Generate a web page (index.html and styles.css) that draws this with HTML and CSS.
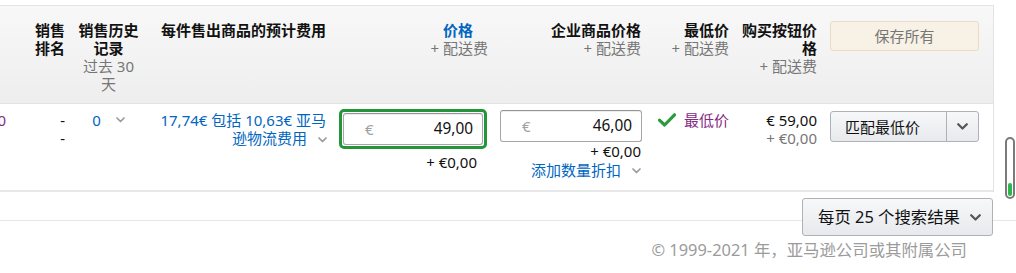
FILE: index.html
```html
<!DOCTYPE html>
<html lang="zh-CN">
<head>
<meta charset="utf-8">
<title>库存</title>
<link rel="stylesheet" href="styles.css">
</head>
<body>
<div class="page">
  <div class="table">
    <div class="grid thead">
      <div class="c c0"></div>
      <div class="c c1 th right">销售排名</div>
      <div class="c c2 th center">销售历史记录<div class="sub">过去 30 天</div></div>
      <div class="c c3 th right">每件售出商品的预计费用</div>
      <div class="c c4 th right"><div class="sort link">价格</div><div class="sub sub-price">+ 配送费</div></div>
      <div class="c c5 th right">企业商品价格<div class="sub">+ 配送费</div></div>
      <div class="c c6 th right">最低价<div class="sub">+ 配送费</div></div>
      <div class="c c7 th right">购买按钮价格<div class="sub">+ 配送费</div></div>
      <div class="c c8"><button class="save-btn">保存所有</button></div>
    </div>
    <div class="grid trow">
      <div class="c c0 right"><span class="visited num0">0</span></div>
      <div class="c c1 right">-<br>-</div>
      <div class="c c2 center"><span class="link">0</span><svg class="chev chev-sales" width="9" height="6" viewBox="0 0 9 6"><polyline points="1,1 4.5,4.5 8,1"/></svg></div>
      <div class="c c3 right link">17,74€ 包括 10,63€ 亚马逊物流费用<svg class="chev chev-fee" width="9" height="6" viewBox="0 0 9 6"><polyline points="1,1 4.5,4.5 8,1"/></svg></div>
      <div class="c c4">
        <div class="ring"><div class="input input-price"><span class="cur">€</span><span class="val">49,00</span></div></div>
        <div class="right ship ship-price">+ €0,00</div>
      </div>
      <div class="c c5">
        <div class="input input-biz"><span class="cur">€</span><span class="val">46,00</span></div>
        <div class="right ship">+ €0,00</div>
        <div class="right link qty">添加数量折扣<svg class="chev chev-qty" width="9" height="6" viewBox="0 0 9 6"><polyline points="1,1 4.5,4.5 8,1"/></svg></div>
      </div>
      <div class="c c6">
        <div class="lowest"><svg class="check" width="18" height="14" viewBox="0 0 18 14"><path d="M1.5 7.2 L6.6 12 L16.5 1.8"/></svg><span class="visited">最低价</span></div>
      </div>
      <div class="c c7 right">€ 59,00<div class="muted">+ €0,00</div></div>
      <div class="c c8">
        <div class="split">
          <button class="split-main">匹配最低价</button>
          <button class="split-arrow"><svg class="chev-dark" width="11" height="7" viewBox="0 0 11 7"><polyline points="1.2,1.2 5.5,5.5 9.8,1.2"/></svg></button>
        </div>
      </div>
    </div>
  </div>
  <div class="pager">
    <button class="pager-btn"><span>每页 25 个搜索结果</span><svg class="chev-dark" width="11" height="7" viewBox="0 0 11 7"><polyline points="1.2,1.2 5.5,5.5 9.8,1.2"/></svg></button>
  </div>
  <div class="footer">© 1999-2021 年，亚马逊公司或其附属公司</div>
  <div class="scroll-thumb"><span class="scroll-fill"></span></div>
</div>
</body>
</html>
```

FILE: styles.css
```css
html, body {
  margin: 0;
  padding: 0;
}
body {
  font-family: "Noto Sans", "Noto Sans CJK SC", sans-serif;
  font-size: 15px;
  line-height: 18px;
  color: #111;
  background: #fff;
  overflow: hidden;
  width: 1016px;
  height: 273px;
}
.page {
  position: relative;
  padding-top: 5px;
  height: 273px;
  box-sizing: border-box;
}
.table {
  width: 993px;
  border-top: 1px solid #e3e3e3;
  border-right: 1px solid #e3e3e3;
}
.grid {
  display: grid;
  grid-template-columns: 20px 59px 87px 174px 163px 152px 88px 88px 176px;
  margin-left: -14px;
}
.thead {
  height: 98px;
  box-sizing: border-box;
  padding-top: 15px;
  background: linear-gradient(#f8f8f8, #eeeeee);
  border-bottom: 1px solid #e3e3e3;
}
.trow {
  height: 88px;
  box-sizing: border-box;
  padding-top: 7px;
  border-bottom: 2px solid #e7e7e7;
}
.c {
  min-width: 0;
}
.th {
  font-weight: 700;
  color: #111;
}
.sub {
  font-weight: 400;
  color: #767676;
}
.right { text-align: right; }
.center { text-align: center; }
.link { color: #0066c0; }
.visited { color: #862a86; }
.muted { color: #767676; }

.c1.th { padding-left: 27px; }
.c2 { padding: 0 12px; }
.sort { padding-right: 16px; }
.sub-price { padding-right: 1px; }
.c7.th { padding-left: 10px; }

.num0 {
  display: inline-block;
  margin-top: -6px;
}

.chev {
  fill: none;
  stroke: #9a9a9a;
  stroke-width: 1.7;
  stroke-linecap: round;
  stroke-linejoin: round;
  vertical-align: middle;
}
.chev-sales { margin-left: 15px; margin-top: -3px; }
.chev-fee { margin-left: 11px; margin-right: -1px; }
.chev-qty { margin-left: 11px; margin-top: -2px; }
.chev-dark {
  fill: none;
  stroke: #555;
  stroke-width: 2.2;
  stroke-linecap: round;
  stroke-linejoin: round;
}

.ring {
  margin: -2px 2px 0 13px;
  border: 3px solid #23963a;
  border-radius: 5px;
  padding: 1px;
  width: 140px;
}
.input {
  display: flex;
  align-items: center;
  justify-content: space-between;
  height: 32px;
  box-sizing: border-box;
  border: 1px solid #a6a6a6;
  border-top-color: #949494;
  border-radius: 3px;
  background: #fff;
  box-shadow: inset 0 1px 0 rgba(0, 0, 0, 0.07);
  padding: 0 9px 0 21px;
}
.val { font-size: 15.4px; }
.input-price { width: 140px; }
.input-biz {
  width: 142px;
  margin: -1px 0 0 11px;
}
.cur { color: #a0a0a0; }
.val { color: #111; }
.ship-price {
  margin-top: 4px;
  padding-right: 12px;
}
.qty { margin-top: 1px; }

.lowest {
  display: flex;
  justify-content: flex-end;
  align-items: center;
  gap: 8px;
}
.check {
  fill: none;
  stroke: #2a9c3e;
  stroke-width: 3.2;
  stroke-linecap: round;
  stroke-linejoin: round;
}

.save-btn {
  display: block;
  margin-left: 13px;
  width: 149px;
  height: 30px;
  border: 1px solid #eadcc4;
  border-radius: 3px;
  background: #f8f1e5;
  color: #767676;
  font: inherit;
  padding: 0;
}

.split {
  display: flex;
  margin-left: 13px;
  width: 149px;
  height: 31px;
  border: 1px solid #adb1b8;
  border-radius: 3px;
  box-sizing: border-box;
  background: linear-gradient(#f7f8fa, #e7e9ec);
  overflow: hidden;
}
.split button {
  font: inherit;
  color: #111;
  background: transparent;
  border: 0;
  padding: 0;
  height: 100%;
}
.split-main {
  width: 116px;
  text-align: left;
  padding-left: 14px !important;
  border-right: 1px solid #adb1b8 !important;
}
.split-arrow {
  flex: 1;
  display: flex;
  align-items: center;
  justify-content: center;
}

.pager {
  height: 29px;
  box-sizing: border-box;
  padding: 6px 23px 0 0;
  border-bottom: 1px solid #e7e7e7;
  display: flex;
  justify-content: flex-end;
  align-items: flex-start;
}
.pager-btn {
  flex: none;
  width: 191px;
  height: 38px;
  display: flex;
  align-items: center;
  justify-content: space-between;
  padding: 0 11px 0 15px;
  border: 1px solid #adb1b8;
  border-radius: 3px;
  background: linear-gradient(#f7f8fa, #e7e9ec);
  font: inherit;
  font-size: 16.4px;
  color: #111;
  position: relative;
  z-index: 1;
}

.footer {
  margin-top: 20px;
  padding-right: 49px;
  text-align: right;
  color: #9b9b9b;
  font-size: 16.4px;
}

.scroll-thumb {
  position: absolute;
  left: 1005px;
  top: 137px;
  width: 10px;
  height: 62px;
  box-sizing: border-box;
  border: 2px solid #7a7a7a;
  border-radius: 6px;
}
.scroll-fill {
  position: absolute;
  left: 1px;
  bottom: 1px;
  width: 4px;
  height: 13px;
  border-radius: 2px;
  background: #2db54e;
}
```
